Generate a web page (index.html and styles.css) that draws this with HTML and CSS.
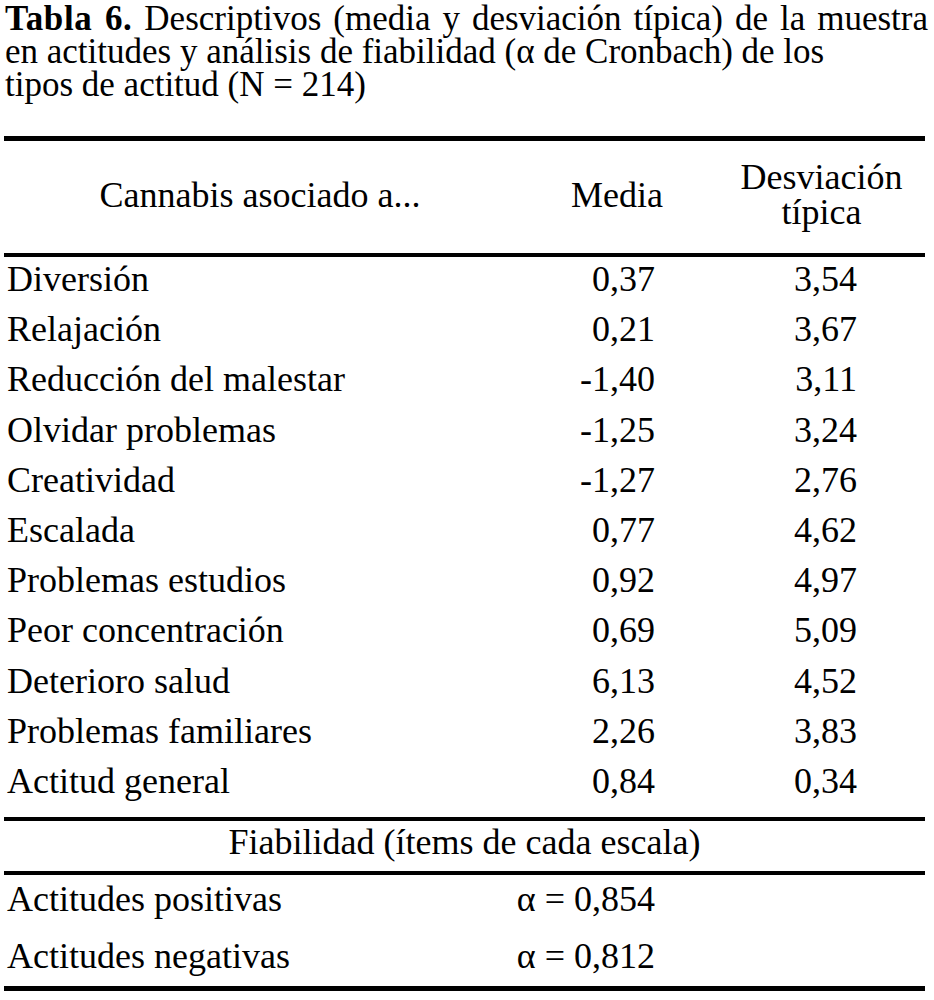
FILE: index.html
```html
<!DOCTYPE html>
<html lang="es">
<head>
<meta charset="utf-8">
<title>Tabla 6</title>
<link rel="stylesheet" href="styles.css">
</head>
<body>
<div class="page">
  <div class="caption">
    <p class="caption-line first-line"><span class="caption-label">Tabla 6.</span> Descriptivos (media y desviación típica) de la muestra</p>
    <p class="caption-line">en actitudes y análisis de fiabilidad (α de Cronbach) de los</p>
    <p class="caption-line">tipos de actitud (N = 214)</p>
  </div>
  <table class="data">
    <colgroup>
      <col class="c1">
      <col class="c2">
      <col class="c3">
    </colgroup>
    <thead>
      <tr>
        <th class="head">Cannabis asociado a...</th>
        <th class="head">Media</th>
        <th class="head">Desviación<br>típica</th>
      </tr>
    </thead>
    <tbody>
      <tr class="row"><td class="label">Diversión</td><td class="num2">0,37</td><td class="num3">3,54</td></tr>
      <tr class="row"><td class="label">Relajación</td><td class="num2">0,21</td><td class="num3">3,67</td></tr>
      <tr class="row"><td class="label">Reducción del malestar</td><td class="num2">-1,40</td><td class="num3">3,11</td></tr>
      <tr class="row"><td class="label">Olvidar problemas</td><td class="num2">-1,25</td><td class="num3">3,24</td></tr>
      <tr class="row"><td class="label">Creatividad</td><td class="num2">-1,27</td><td class="num3">2,76</td></tr>
      <tr class="row"><td class="label">Escalada</td><td class="num2">0,77</td><td class="num3">4,62</td></tr>
      <tr class="row"><td class="label">Problemas estudios</td><td class="num2">0,92</td><td class="num3">4,97</td></tr>
      <tr class="row"><td class="label">Peor concentración</td><td class="num2">0,69</td><td class="num3">5,09</td></tr>
      <tr class="row"><td class="label">Deterioro salud</td><td class="num2">6,13</td><td class="num3">4,52</td></tr>
      <tr class="row"><td class="label">Problemas familiares</td><td class="num2">2,26</td><td class="num3">3,83</td></tr>
      <tr class="row last"><td class="label">Actitud general</td><td class="num2">0,84</td><td class="num3">0,34</td></tr>
    </tbody>
    <tbody>
      <tr class="section"><td class="section-cell" colspan="3">Fiabilidad (ítems de cada escala)</td></tr>
      <tr class="alpha"><td class="label">Actitudes positivas</td><td class="num2">α = 0,854</td><td class="num3"></td></tr>
      <tr class="alpha last"><td class="label">Actitudes negativas</td><td class="num2">α = 0,812</td><td class="num3"></td></tr>
    </tbody>
  </table>
</div>
</body>
</html>
```

FILE: styles.css
```css
html, body {
  margin: 0;
  padding: 0;
  background: #ffffff;
}

body {
  font-family: "Liberation Serif", "Times New Roman", serif;
  color: #000000;
}

.page {
  padding: 2px 0 0 4px;
  width: 921px;
}

.caption {
  padding-left: 1px;
  font-size: 35px;
  line-height: 33px;
}

.caption-line {
  margin: 0;
  white-space: nowrap;
}

.first-line {
  width: 923px;
  text-align: justify;
  text-align-last: justify;
}

.caption-label {
  font-weight: bold;
  letter-spacing: 0.6px;
}

.data {
  margin-top: 35px;
  width: 921px;
  border-collapse: separate;
  border-spacing: 0;
  table-layout: fixed;
  font-size: 36px;
}

.c1 { width: 512px; }
.c2 { width: 202px; }
.c3 { width: 207px; }

.head {
  font-weight: normal;
  text-align: center;
  vertical-align: middle;
  line-height: 35px;
  padding: 19px 0 23px;
  border-top: 5px solid #000;
  border-bottom: 4px solid #000;
}

.row td {
  line-height: 42.2px;
  padding: 1px 0 7px;
  vertical-align: top;
}

.row.last td {
  padding-bottom: 15px;
}

.label {
  text-align: left;
  padding-left: 3px !important;
  white-space: nowrap;
}

.num2 {
  text-align: right;
  padding-right: 63px !important;
  white-space: nowrap;
}

.num3 {
  text-align: right;
  padding-right: 68px !important;
  white-space: nowrap;
}

.section-cell {
  text-align: center;
  line-height: 32px;
  padding: 5px 0 13px;
  border-top: 4px solid #000;
  border-bottom: 4px solid #000;
}

.alpha td {
  line-height: 42px;
  padding: 3px 0 11px;
  vertical-align: top;
}

.alpha.last td {
  padding: 4px 0 9px;
  border-bottom: 5px solid #000;
}
```
